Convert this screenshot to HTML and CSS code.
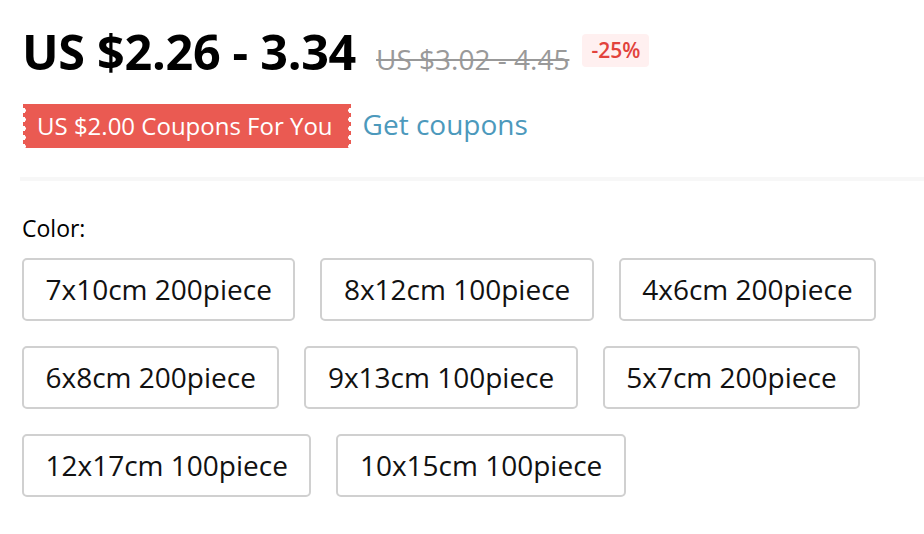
FILE: index.html
```html
<!DOCTYPE html>
<html>
<head>
<meta charset="utf-8">
<link rel="stylesheet" href="styles.css">
</head>
<body>
<div class="product">
  <div class="price-row">
    <span class="price">US $2.26 - 3.34</span>
    <span class="old-price">US $3.02 - 4.45</span>
    <span class="discount">-25%</span>
  </div>
  <div class="coupon-row">
    <span class="coupon">US $2.00 Coupons For You</span>
    <a class="get-coupons">Get coupons</a>
  </div>
  <div class="divider"></div>
  <div class="sku">
    <div class="sku-title">Color:</div>
    <div class="sku-list">
      <div class="sku-item">7x10cm 200piece</div>
      <div class="sku-item">8x12cm 100piece</div>
      <div class="sku-item">4x6cm 200piece</div>
      <div class="sku-item">6x8cm 200piece</div>
      <div class="sku-item">9x13cm 100piece</div>
      <div class="sku-item">5x7cm 200piece</div>
      <div class="sku-item">12x17cm 100piece</div>
      <div class="sku-item">10x15cm 100piece</div>
    </div>
  </div>
</div>
</body>
</html>
```
FILE: styles.css
```css
* { box-sizing: border-box; }
body {
  margin: 0;
  background: #fff;
  font-family: "Open Sans", "Noto Sans", sans-serif;
  color: #000;
}
.product {
  padding: 20px 0 0 20px;
}
.price-row {
  display: flex;
  align-items: baseline;
  padding-left: 2px;
  height: 62px;
}
.price {
  font-size: 48.5px;
  font-weight: 700;
  line-height: 62px;
  letter-spacing: -0.3px;
}
.old-price {
  margin-left: 20px;
  font-size: 28px;
  color: #999;
  text-decoration: line-through;
  text-decoration-thickness: 2px;
}
.discount {
  margin-left: 13px;
  align-self: center;
  position: relative;
  top: -1px;
  background: #fff0f0;
  color: #e2423c;
  font-size: 21px;
  font-weight: 600;
  line-height: 33px;
  padding: 0 9px;
  border-radius: 4px;
}
.coupon-row {
  display: flex;
  align-items: center;
  margin-top: 22px;
  padding-left: 3px;
}
.coupon {
  display: inline-block;
  height: 44px;
  line-height: 44px;
  padding: 0 18px 0 14px;
  color: #fff;
  font-size: 24px;
  background:
    radial-gradient(circle at 0 50%, #fff 2.5px, transparent 3px) left 2px / 5px 9px repeat-y,
    radial-gradient(circle at 100% 50%, #fff 2.5px, transparent 3px) right 2px / 5px 9px repeat-y,
    #ea5a52;
  background-origin: border-box;
}
.get-coupons {
  margin-left: 12px;
  font-size: 28px;
  color: #4c99bc;
  line-height: 44px;
  position: relative;
  top: -2px;
}
.divider {
  margin-top: 29px;
  height: 4px;
  background: #f7f7f7;
}
.sku {
  padding-top: 33px;
}
.sku-title {
  font-size: 23px;
  line-height: 29px;
  padding-left: 2px;
}
.sku-list {
  display: flex;
  flex-wrap: wrap;
  gap: 25px 25px;
  margin-top: 15px;
  padding-left: 2px;
  width: 880px;
}
.sku-item {
  height: 63px;
  line-height: 59px;
  padding: 0 21.5px;
  border: 2px solid #d0d0d0;
  border-radius: 5px;
  font-size: 28px;
  color: #111;
  white-space: nowrap;
}
```
